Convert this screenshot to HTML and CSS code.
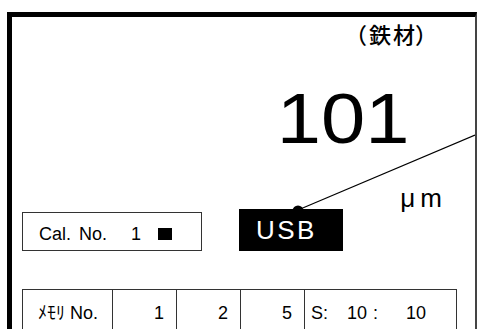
FILE: index.html
```html
<!DOCTYPE html>
<html lang="ja">
<head>
    <meta charset="UTF-8" />
    <title>膜厚計 表示</title>
    <link rel="stylesheet" href="styles.css">
</head>
<body>
    <div class="panel">
        <div class="material">（鉄材）</div>
        <div class="reading"><span class="reading-value">101</span></div>
        <div class="unit">μm</div>
        <div class="status">
            <div class="cal">
                <span>Cal. No.</span>
                <span class="cal-num">1</span>
                <span class="cal-mark"></span>
            </div>
            <div class="usb">USB</div>
        </div>
        <table class="memory">
            <tr>
                <td class="memory-label">ﾒﾓﾘ No.</td>
                <td class="num">1</td>
                <td class="num">2</td>
                <td class="num">5</td>
                <td class="stat"><span>S:</span><span class="s-min">10</span><span class="s-sep">:</span><span class="s-sec">10</span></td>
            </tr>
        </table>
        <svg class="pointer" width="463" height="312" viewBox="0 0 463 312">
            <line x1="463" y1="118" x2="286" y2="193" stroke="#000" stroke-width="1.2" />
            <circle cx="286" cy="194" r="5.5" fill="#000" />
        </svg>
    </div>
</body>
</html>
```

FILE: styles.css
```css
body {
    margin: 0;
    background: #fff;
    font-family: "Liberation Sans", "Noto Sans CJK JP", sans-serif;
    color: #000;
    overflow: hidden;
}
.panel {
    position: relative;
    margin: 12px 0 0 7px;
    height: 330px;
    border-top: 5px solid #000;
    border-left: 5px solid #000;
    border-right: 2px solid #444;
}
.material {
    padding-top: 5px;
    padding-right: 38px;
    text-align: right;
    font-family: "Noto Sans CJK JP", sans-serif;
    font-weight: 500;
    font-size: 22px;
    line-height: 22px;
    height: 22px;
}
.material::first-letter {
    letter-spacing: 2px;
}
.reading {
    margin-top: 39px;
    padding-right: 66px;
    text-align: right;
    font-size: 71px;
    line-height: 71px;
    height: 71px;
}
.reading-value {
    display: inline-block;
    transform: scaleX(1.12);
    transform-origin: right center;
}
.unit {
    margin-top: 34px;
    padding-right: 28px;
    text-align: right;
    font-size: 26px;
    line-height: 20px;
    height: 20px;
    letter-spacing: 5px;
}
.status {
    display: flex;
    align-items: flex-end;
    gap: 37px;
    margin: 1px 0 0 10px;
}
.cal {
    display: flex;
    align-items: center;
    box-sizing: border-box;
    width: 180px;
    height: 39px;
    padding: 4px 0 0 16px;
    border: 1px solid #333;
    font-size: 18px;
    line-height: 18px;
    word-spacing: 3px;
}
.cal-num {
    margin-left: 24px;
}
.cal-mark {
    display: inline-block;
    width: 14px;
    height: 12px;
    margin-left: 17px;
    background: #000;
}
.usb {
    box-sizing: border-box;
    width: 104px;
    height: 42px;
    padding-left: 17px;
    background: #000;
    color: #fff;
    font-size: 26px;
    line-height: 42px;
    letter-spacing: 2.5px;
}
.memory {
    margin: 38px 0 0 10px;
    width: 435px;
    border-collapse: collapse;
    table-layout: fixed;
    font-size: 18px;
    line-height: 18px;
}
.memory td {
    height: 44px;
    padding: 14px 12px 0 0;
    vertical-align: top;
    border: 1px solid #333;
    box-sizing: border-box;
    white-space: nowrap;
}
.memory-label {
    width: 90px;
    padding-left: 15px !important;
}
.num {
    width: 64px;
    text-align: right;
}
.stat {
    padding-left: 6px !important;
}
.s-min {
    margin-left: 19px;
}
.s-sep {
    margin-left: 6px;
}
.s-sec {
    margin-left: 28px;
}
.pointer {
    position: absolute;
    top: 0;
    left: 0;
}
```
